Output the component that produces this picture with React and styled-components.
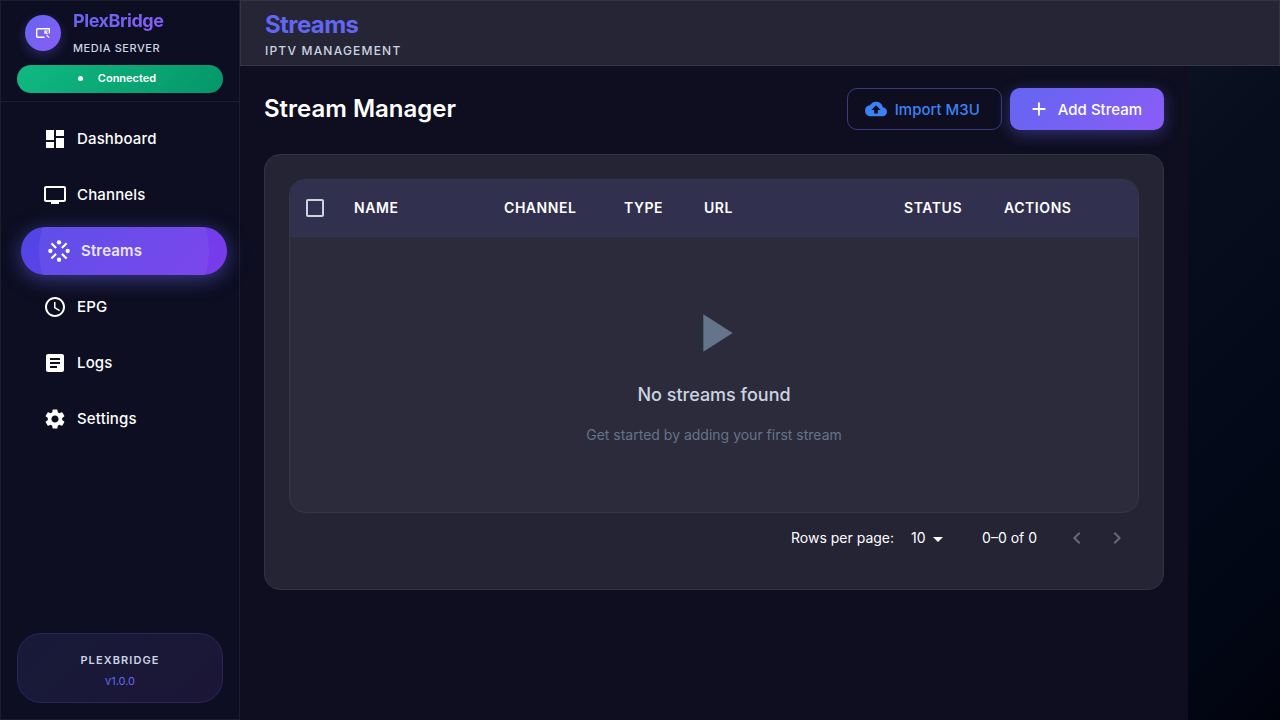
import React from 'react';
import styled, { createGlobalStyle, css } from 'styled-components';
import {
  MdDashboard, MdTv, MdStream, MdSchedule, MdArticle, MdSettings, MdCloudUpload,
  MdAdd, MdPlayArrow, MdKeyboardArrowLeft, MdKeyboardArrowRight, MdArrowDropDown,
} from 'react-icons/md';

const GlobalStyle = createGlobalStyle`
  *, *::before, *::after { box-sizing: border-box; }
  html, body, #root { min-height: 100vh; }
  body {
    margin: 0;
    background: #01020e;
    color: #fff;
    font-family: Inter, "Liberation Sans", sans-serif;
    font-size: 14px;
  }
  h1, h2, h3, p { margin: 0; }
  button, select, input { font: inherit; color: inherit; margin: 0; }
`;

const Shell = styled.div`
  display: flex;
  min-height: 100vh;
  background: linear-gradient(135deg, #0c1323 60%, #080e1e 68%, #040a1a 80%, #020715 93%, #01020c);
`;

const Sidebar = styled.aside`
  display: flex;
  flex-direction: column;
  flex: 0 0 240px;
  background: #0d0e21;
  border: 1px solid #1c1d30;
`;

const SidebarHeader = styled.div`
  padding: 5px 16px 8px;
  border-bottom: 1px solid #1c1d30;
`;

const Brand = styled.div`
  display: flex;
  align-items: center;
  gap: 12px;
  padding: 0 8px;
  margin-bottom: 5px;
`;

const BrandMark = styled.div`
  display: grid;
  place-items: center;
  width: 36px;
  height: 36px;
  border-radius: 50%;
  background: linear-gradient(135deg, #6366f1, #8b5cf6);
  box-shadow: 0 4px 12px rgba(99, 102, 241, 0.3);
`;

const BrandName = styled.div`
  font-size: 18px;
  font-weight: 700;
  line-height: 30px;
  letter-spacing: -0.025em;
  background: linear-gradient(135deg, #6366f1, #8b5cf6);
  background-clip: text;
  color: transparent;
`;

const BrandTag = styled.div`
  font-size: 11px;
  font-weight: 500;
  line-height: 24px;
  letter-spacing: 0.05em;
  color: #cbd5e1;
`;

const StatusPill = styled.div`
  display: flex;
  align-items: center;
  justify-content: center;
  gap: 15px;
  height: 28px;
  padding: 0 6px 2px 0;
  border-radius: 14px;
  background: linear-gradient(135deg, #10b981, #059669);
  font-size: 11px;
  font-weight: 600;
`;

const StatusDot = styled.span`
  width: 5px;
  height: 5px;
  border-radius: 50%;
  background: #fff;
`;

const Nav = styled.nav`
  display: flex;
  flex-direction: column;
  gap: 8px;
  padding: 13px 16px;
`;

const NavItem = styled.a`
  position: relative;
  display: flex;
  align-items: center;
  gap: 10px;
  height: 48px;
  padding: 0 26px;
  border-radius: 24px;
  color: #fff;
  font-size: 15px;
  font-weight: 500;
  letter-spacing: 0.01em;
  text-decoration: none;

  svg { font-size: 24px; }
  span { padding-bottom: 2px; }

  ${(p) => p.$active && css`
    left: 4px;
    overflow: hidden;
    gap: 9px;
    padding: 0 25px;
    font-weight: 600;
    background: linear-gradient(135deg, #4f46e5, #7c3aed);
    box-shadow: 0 4px 20px rgba(99, 102, 241, 0.5);

    svg {
      position: relative;
      z-index: 1;
      font-size: 26px;
    }

    &::after {
      content: "";
      position: absolute;
      left: 18px;
      right: 18px;
      top: 50%;
      aspect-ratio: 1;
      border-radius: 50%;
      background: rgba(139, 120, 240, 0.2);
      transform: translateY(-50%);
    }
  `}
`;

const VersionCard = styled.div`
  margin: auto 16px 16px;
  padding: 16px 0 10px;
  border: 1px solid #29265a;
  border-radius: 24px;
  background: linear-gradient(135deg, #181a39, #1c1636);
  text-align: center;
`;

const VersionName = styled.p`
  font-size: 11px;
  font-weight: 600;
  line-height: 20px;
  letter-spacing: 0.1em;
  color: #cbd5e1;
`;

const VersionNumber = styled.p`
  font-size: 11px;
  line-height: 22px;
  color: #6366f1;
`;

const Page = styled.div`
  flex: 1;
  min-width: 0;
  display: flex;
  flex-direction: column;
`;

const TopBar = styled.header`
  padding: 8px 24px 4px;
  background: #252535;
  border: 1px solid #333343;
`;

const TopTitle = styled.h1`
  font-size: 24px;
  font-weight: 700;
  line-height: 32px;
  letter-spacing: -0.025em;
  color: #6366f1;
`;

const TopSubtitle = styled.p`
  font-size: 12px;
  font-weight: 500;
  line-height: 20px;
  letter-spacing: 0.1em;
  color: #cbd5e1;
`;

const Content = styled.main`
  flex: 1;
  width: 100%;
  max-width: 948px;
  padding: 22px 24px 24px;
  background: #0e0e20;
`;

const TitleRow = styled.div`
  display: flex;
  align-items: center;
  gap: 8px;
  margin-bottom: 24px;
`;

const PageTitle = styled.h2`
  margin-right: auto;
  font-size: 24px;
  font-weight: 600;
  line-height: 42px;
`;

const Button = styled.button`
  display: inline-flex;
  align-items: center;
  gap: 8px;
  height: 42px;
  padding: 0 21px 0 17px;
  border: 1px solid #3a3a85;
  border-radius: 10px;
  background: transparent;
  color: #3b82f6;
  font-size: 15px;
  font-weight: 500;

  svg { font-size: 22px; }

  ${(p) => p.$primary && css`
    padding: 0 22px 0 18px;
    border: 0;
    background: linear-gradient(135deg, #6366f1, #8b5cf6);
    box-shadow: 0 4px 16px rgba(99, 102, 241, 0.4);
    color: #fff;
  `}
`;

const Card = styled.section`
  padding: 24px;
  border: 1px solid #323242;
  border-radius: 16px;
  background: #242434;
`;

const TableFrame = styled.div`
  overflow: hidden;
  border: 1px solid #363746;
  border-radius: 16px;
  background: #2c2b3b;
`;

const Table = styled.table`
  width: 100%;
  table-layout: fixed;
  border-collapse: separate;
  border-spacing: 0;
`;

const HeadCell = styled.th`
  width: ${(p) => p.$width}px;
  height: 57px;
  padding: 0 16px;
  border-bottom: 1px solid #353645;
  background: #31304f;
  font-size: 14px;
  font-weight: 600;
  letter-spacing: 0.04em;
  text-align: left;

  &[scope] { padding-bottom: 2px; }
`;

const Checkbox = styled.input`
  display: block;
  appearance: none;
  width: 18px;
  height: 18px;
  border: 2px solid #cbd5e1;
  border-radius: 2px;
`;

const EmptyCell = styled.td`
  height: 275px;
  padding: 0 0 2px;
  text-align: center;
`;

const EmptyIcon = styled(MdPlayArrow)`
  display: block;
  margin: 0 auto 16px;
  font-size: 64px;
  color: #64748b;
`;

const EmptyTitle = styled.h3`
  margin-bottom: 14px;
  font-size: 18px;
  font-weight: 500;
  line-height: 28px;
  color: #cbd5e1;
`;

const EmptyText = styled.p`
  font-size: 14px;
  line-height: 24px;
  color: #64748b;
`;

const Pagination = styled.div`
  display: flex;
  align-items: center;
  justify-content: flex-end;
  height: 52px;
  padding: 0 2px 4px 0;
`;

const SelectWrap = styled.div`
  position: relative;
  margin: 0 32px 0 8px;

  svg {
    position: absolute;
    right: 0;
    top: 2px;
    font-size: 24px;
    pointer-events: none;
  }
`;

const Select = styled.select`
  appearance: none;
  display: block;
  width: 48px;
  height: 24px;
  padding: 0 20px 0 9px;
  border: 0;
  background: transparent;
`;

const PageButton = styled.button`
  display: grid;
  place-items: center;
  width: 40px;
  height: 40px;
  padding: 2px 0 0;
  border: 0;
  background: transparent;
  color: #6a6a77;

  svg { font-size: 24px; }
`;

const Range = styled.span`
  margin-right: 20px;
`;

const NAV = [
  ['Dashboard', MdDashboard],
  ['Channels', MdTv],
  ['Streams', MdStream],
  ['EPG', MdSchedule],
  ['Logs', MdArticle],
  ['Settings', MdSettings],
];

const COLUMNS = [
  ['Name', 150], ['Channel', 120], ['Type', 80], ['URL', 200], ['Status', 100], ['Actions', 150],
];

function BridgeIcon() {
  return (
    <svg width="16" height="12" viewBox="0 0 16 12" fill="none" stroke="#fff" strokeWidth="1.4" aria-hidden="true">
      <path d="M9.5 10.3H2.6a.9.9 0 0 1-.9-.9V2.6a.9.9 0 0 1 .9-.9h11.7v4.8" />
      <path d="M12.8 4H9.9v3M10.2 4.4l2.3 2.6M11.6 8.2l2.7 2.4" strokeWidth="1.2" />
    </svg>
  );
}

export default function App() {
  return (
    <>
      <GlobalStyle />
      <Shell>
        <Sidebar>
          <SidebarHeader>
            <Brand>
              <BrandMark><BridgeIcon /></BrandMark>
              <div>
                <BrandName>PlexBridge</BrandName>
                <BrandTag>MEDIA SERVER</BrandTag>
              </div>
            </Brand>
            <StatusPill><StatusDot />Connected</StatusPill>
          </SidebarHeader>
          <Nav aria-label="Main">
            {NAV.map(([label, Icon]) => (
              <NavItem
                key={label}
                href={`#${label.toLowerCase()}`}
                $active={label === 'Streams'}
                aria-current={label === 'Streams' ? 'page' : undefined}
              >
                <Icon aria-hidden="true" />
                <span>{label}</span>
              </NavItem>
            ))}
          </Nav>
          <VersionCard>
            <VersionName>PLEXBRIDGE</VersionName>
            <VersionNumber>v1.0.0</VersionNumber>
          </VersionCard>
        </Sidebar>
        <Page>
          <TopBar>
            <TopTitle>Streams</TopTitle>
            <TopSubtitle>IPTV MANAGEMENT</TopSubtitle>
          </TopBar>
          <Content>
            <TitleRow>
              <PageTitle>Stream Manager</PageTitle>
              <Button type="button"><MdCloudUpload aria-hidden="true" />Import M3U</Button>
              <Button type="button" $primary><MdAdd aria-hidden="true" />Add Stream</Button>
            </TitleRow>
            <Card>
              <TableFrame>
                <Table>
                  <thead>
                    <tr>
                      <HeadCell $width={48}><Checkbox type="checkbox" aria-label="Select all streams" /></HeadCell>
                      {COLUMNS.map(([label, width]) => (
                        <HeadCell key={label} $width={width} scope="col">{label.toUpperCase()}</HeadCell>
                      ))}
                    </tr>
                  </thead>
                  <tbody>
                    <tr>
                      <EmptyCell colSpan={7}>
                        <EmptyIcon aria-hidden="true" />
                        <EmptyTitle>No streams found</EmptyTitle>
                        <EmptyText>Get started by adding your first stream</EmptyText>
                      </EmptyCell>
                    </tr>
                  </tbody>
                </Table>
              </TableFrame>
              <Pagination>
                <label htmlFor="rows">Rows per page:</label>
                <SelectWrap>
                  <Select id="rows" defaultValue="10">
                    <option>10</option>
                    <option>25</option>
                    <option>50</option>
                  </Select>
                  <MdArrowDropDown aria-hidden="true" />
                </SelectWrap>
                <Range>0–0 of 0</Range>
                <PageButton type="button" disabled aria-label="Previous page"><MdKeyboardArrowLeft /></PageButton>
                <PageButton type="button" disabled aria-label="Next page"><MdKeyboardArrowRight /></PageButton>
              </Pagination>
            </Card>
          </Content>
        </Page>
      </Shell>
    </>
  );
}
